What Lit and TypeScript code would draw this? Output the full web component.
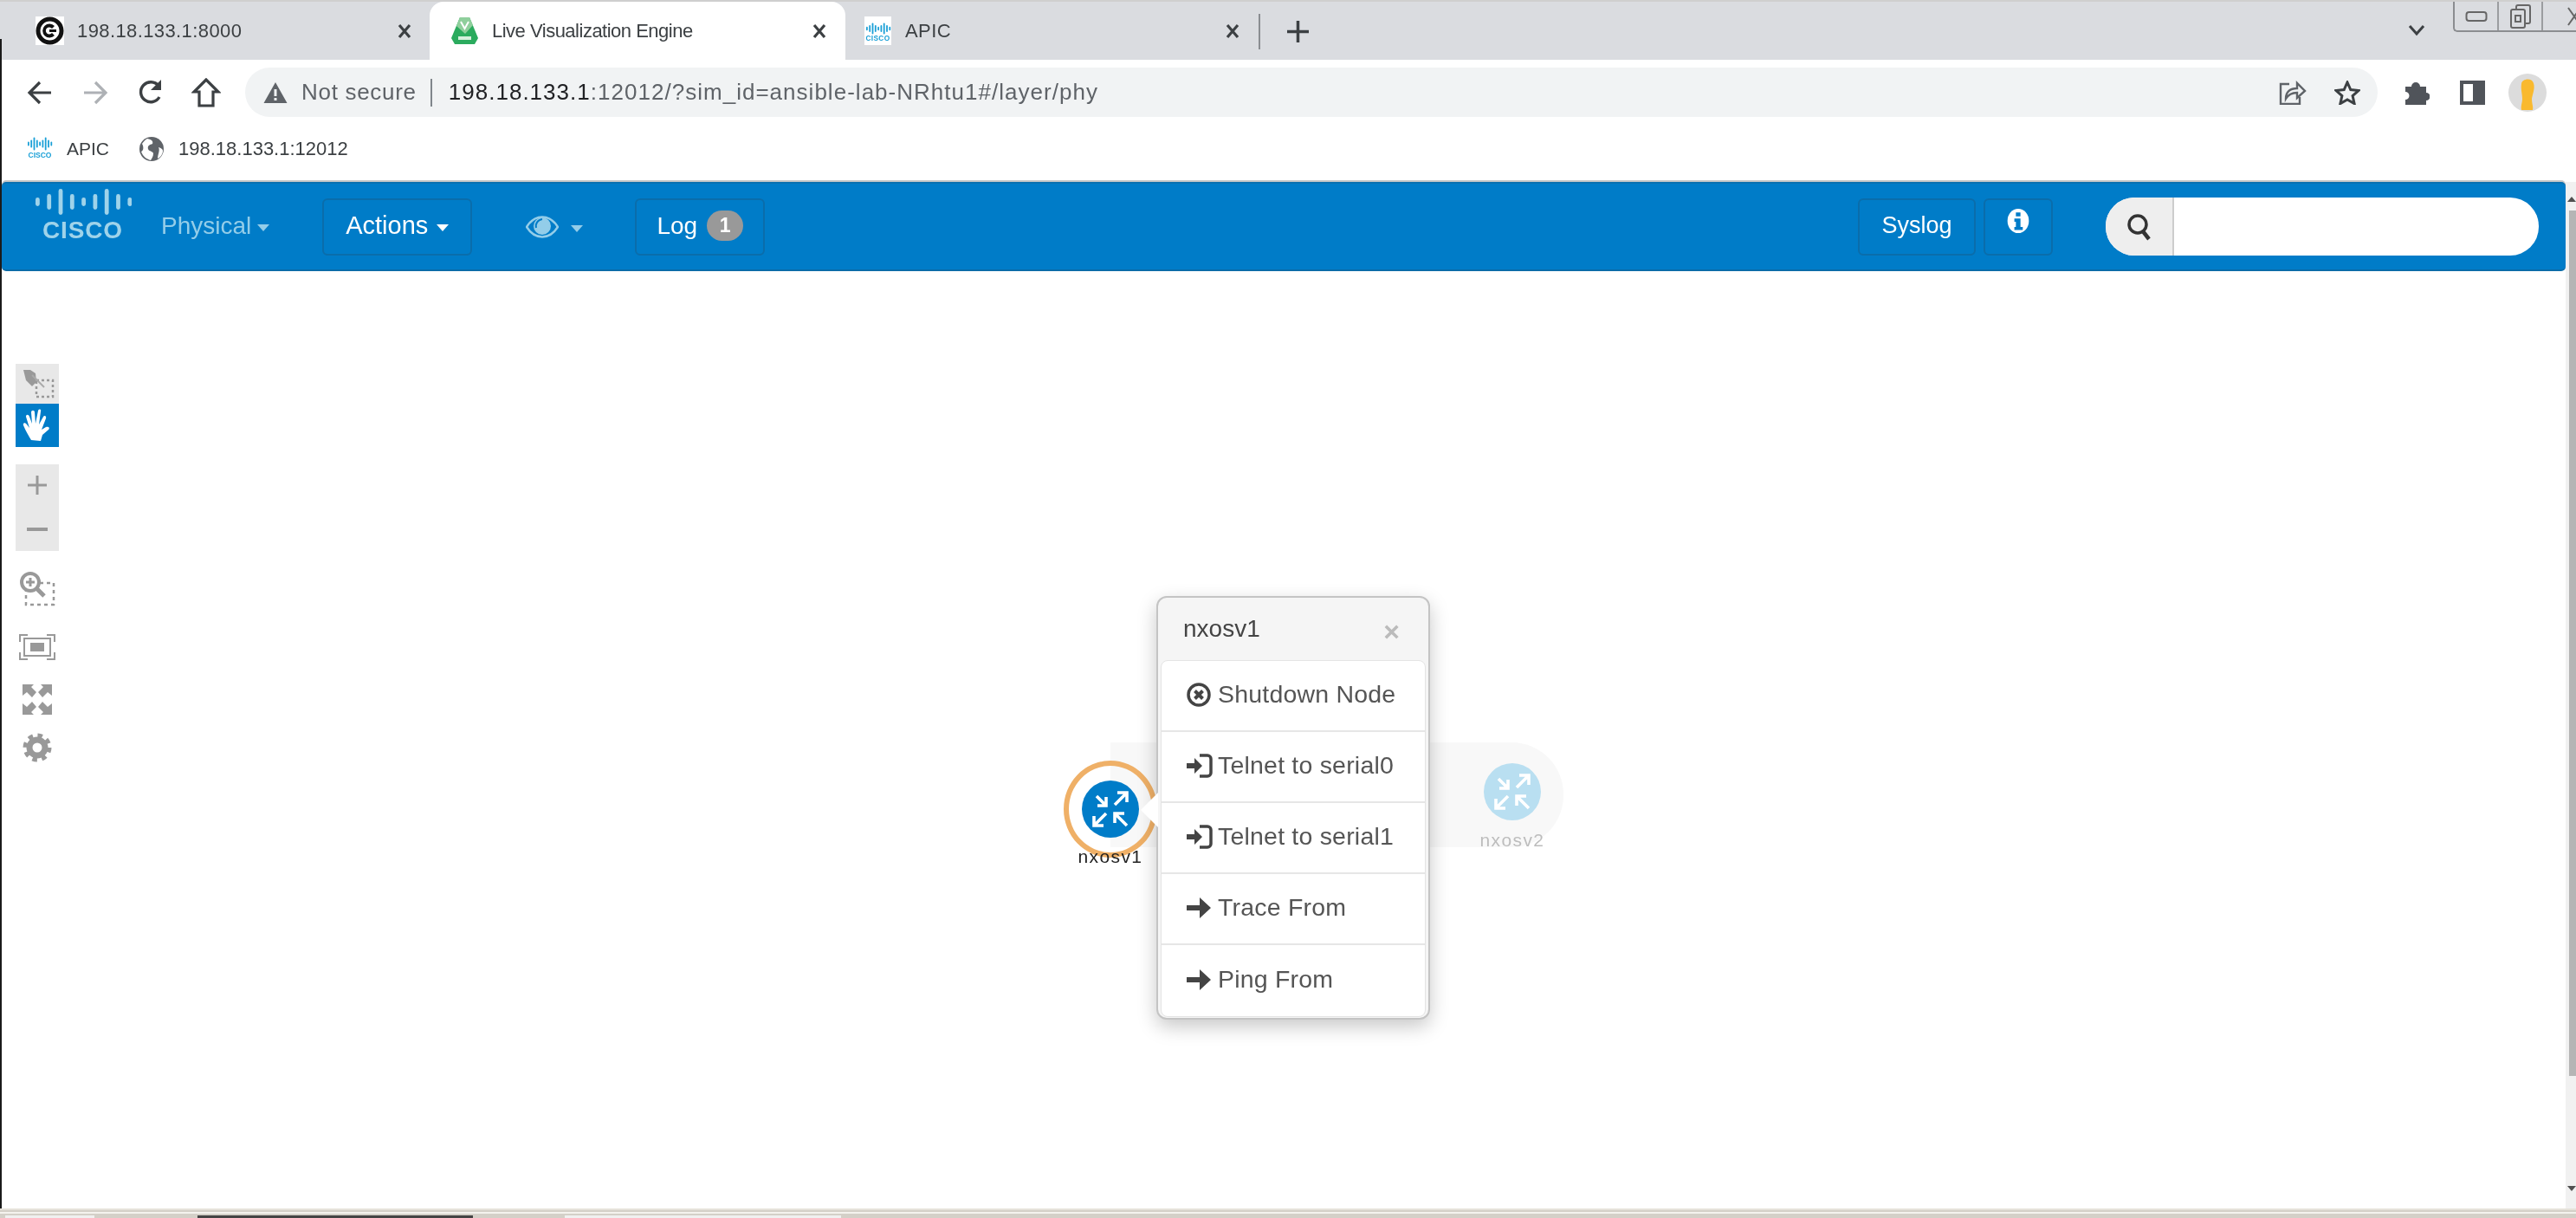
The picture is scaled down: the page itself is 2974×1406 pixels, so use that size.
import { LitElement, html, svg, css } from "lit";
import { customElement } from "lit/decorators.js";

const ciscoBars = (x0: number, step: number, w: number, cy: number, scale: number, color: string) =>
  [0.33, 0.6, 1, 0.6, 0.33, 0.6, 1, 0.6, 0.33].map(
    (h, i) => svg`<rect x=${x0 + i * step} y=${cy - (h * scale) / 2} width=${w} height=${h * scale} rx=${w / 2} fill=${color}></rect>`
  );

const smallCisco = html`<svg width="30" height="30" viewBox="0 0 30 30">
  ${ciscoBars(1, 3.3, 1.8, 9, 15, "#1ba0d7")}
  <text x="15" y="25" text-anchor="middle" font-family="Liberation Sans" font-weight="700" font-size="9" textLength="27" lengthAdjust="spacingAndGlyphs" fill="#1ba0d7">CISCO</text>
</svg>`;

const tabCisco = html`<svg width="31" height="33" viewBox="0 0 31 33">
  <rect width="31" height="33" fill="#fff"></rect>
  ${ciscoBars(2, 3.3, 1.8, 14, 13, "#1ba0d7")}
  <text x="15.500" y="28" text-anchor="middle" font-family="Liberation Sans" font-weight="700" font-size="9.500" textLength="28" lengthAdjust="spacingAndGlyphs" fill="#1ba0d7">CISCO</text>
</svg>`;

const menuIcons: Record<string, unknown> = {
  shut: html`<svg width="30" height="30" viewBox="0 0 30 30">
    <circle cx="14" cy="15" r="12" fill="none" stroke="#444" stroke-width="3.5"></circle>
    <path d="M9.5 10.5l9 9M18.5 10.5l-9 9" stroke="#444" stroke-width="4"></path>
  </svg>`,
  login: html`<svg width="30" height="30" viewBox="0 0 30 30">
    <path d="M0 12h9V6l9 9-9 9v-6H0z" fill="#444"></path>
    <path d="M15 3h9a4 4 0 0 1 4 4v16a4 4 0 0 1-4 4h-9" fill="none" stroke="#444" stroke-width="3.5"></path>
  </svg>`,
  arrow: html`<svg width="30" height="30" viewBox="0 0 30 30">
    <path d="M0 12h15V3l13 12-13 12v-9H0z" fill="#444"></path>
  </svg>`,
};

const nodeArrows = (c: string) => html`<svg width="66" height="66" viewBox="0 0 66 66">
  <g fill="none" stroke=${c} stroke-width="3.6">
    <path d="M17 18l11 11M28 19v10H18"></path>
    <path d="M38 28l14-14M41 14h11v11"></path>
    <path d="M14 52l14-14M14 41v11h11"></path>
    <path d="M52 52L38 38M38 49V38h11"></path>
  </g>
</svg>`;

const menu = [
  { icon: "shut", label: "Shutdown Node" },
  { icon: "login", label: "Telnet to serial0" },
  { icon: "login", label: "Telnet to serial1" },
  { icon: "arrow", label: "Trace From" },
  { icon: "arrow", label: "Ping From" },
];

@customElement("app-root")
export class AppRoot extends LitElement {
  static styles = css`
    :host {
      display: flex;
      flex-direction: column;
      position: relative;
      width: 2974px;
      height: 1406px;
      overflow: hidden;
      background: #fff;
      font-family: "Liberation Sans", Arial, sans-serif;
      color: #3c4043;
      filter: blur(0.5px);
    }
    svg {
      display: block;
      flex: none;
    }
    .edge {
      position: absolute;
      left: 0;
      top: 45px;
      bottom: 11px;
      width: 2px;
      background: #1a1a1a;
    }

    /* browser chrome */
    .tabstrip {
      display: flex;
      align-items: stretch;
      height: 67px;
      margin-top: 2px;
      flex: none;
      background: #dadce0;
      box-shadow: 0 -2px 0 #cfcfcf;
    }
    .tab {
      display: flex;
      align-items: center;
      width: 480px;
      padding: 0 21px 0 24px;
      box-sizing: border-box;
      font-size: 22px;
      letter-spacing: 0.4px;
      color: #3c4043;
    }
    .tab.first {
      width: 496px;
      padding: 0 20px 0 41px;
    }
    .tab.active {
      background: #fff;
      border-radius: 16px 16px 0 0;
      letter-spacing: -0.5px;
    }
    .tab.last {
      width: 477px;
      padding-left: 22px;
    }
    .tab .name {
      flex: 1;
      margin-left: 15px;
    }
    .tab.last .name {
      margin-left: 16px;
    }
    .close {
      flex: none;
    }
    .tab-sep {
      width: 2px;
      height: 41px;
      margin-top: 14px;
      background: #8a8d91;
    }
    .newtab {
      margin: 22px 0 0 31px;
    }
    .strip-end {
      flex: 1;
      display: flex;
      justify-content: flex-end;
    }
    .chev {
      margin: 26px 32px 0 0;
    }
    .winctl {
      display: flex;
      height: 33px;
      border: solid #8b8d90;
      border-width: 0 0 2px 2px;
      border-radius: 0 0 0 5px;
      margin-right: -7px;
    }
    .winctl div {
      width: 49px;
      border-right: 2px solid #9b9da0;
      display: flex;
      align-items: center;
      justify-content: center;
    }
    .winctl .x-cell {
      justify-content: flex-end;
      margin-right: -6px;
    }

    .toolbar {
      display: flex;
      align-items: center;
      height: 57px;
      padding: 9px 24px 11px 14px;
      flex: none;
    }
    .tbtn {
      width: 64px;
      display: flex;
      justify-content: center;
      flex: none;
    }
    .omni {
      display: flex;
      align-items: center;
      width: 2462px;
      height: 57px;
      margin: 0 13px;
      padding: 0 21px;
      box-sizing: border-box;
      flex: none;
      background: #f1f3f4;
      border-radius: 29px;
      font-size: 26px;
    }
    .secure {
      margin-left: 16px;
      letter-spacing: 0.7px;
      color: #5f6368;
    }
    .omni-sep {
      width: 2px;
      height: 32px;
      margin: 0 19px 0 16px;
      background: #80868b;
    }
    .url {
      flex: 1;
      letter-spacing: 1.02px;
      color: #5f6368;
    }
    .url b {
      font-weight: 400;
      color: #202124;
    }
    .omni-icons {
      display: flex;
      gap: 32px;
      margin-right: -1px;
    }

    .bookmarks {
      display: flex;
      align-items: center;
      height: 52px;
      padding: 0 0 0 31px;
      flex: none;
      font-size: 21px;
      color: #3c4043;
    }
    .bm-name {
      margin: 0 35px 0 16px;
    }
    .bm-url {
      margin-left: 17px;
      font-size: 22px;
    }
    .top-rule {
      height: 12px;
      flex: none;
    }

    /* page */
    .body {
      display: flex;
      flex: 1;
      min-height: 0;
    }
    .page {
      flex: 1;
      display: flex;
      flex-direction: column;
      position: relative;
    }
    .scroll {
      width: 12px;
      flex: none;
      padding: 33px 0 0 4px;
      box-sizing: border-box;
      position: relative;
      background: #f1f1f1;
    }
    .thumb {
      height: 999px;
      background: #b5b5b5;
    }
    .scroll-up,
    .scroll-down {
      position: absolute;
      right: 0;
      width: 0;
      height: 0;
      border: 5px solid transparent;
    }
    .scroll-up {
      top: 12px;
      border-bottom: 6px solid #505050;
    }
    .scroll-down {
      bottom: 15px;
      border-top: 6px solid #505050;
    }

    .navbar {
      display: flex;
      align-items: center;
      height: 103px;
      flex: none;
      margin-left: 2px;
      box-sizing: border-box;
      background: #007cc8;
      border-bottom: 2px solid #0a6ba8;
      border-top: 2px solid #0a70b0;
      border-radius: 5px;
      box-shadow: 0 -2px 0 #c8c8c8;
      font-size: 28px;
      color: #fff;
    }
    .logo {
      align-self: flex-start;
      margin: 6px 0 0 38px;
    }
    .physical {
      display: flex;
      align-items: center;
      margin-left: 34px;
      padding-bottom: 2px;
      color: #93cde9;
    }
    .caret {
      width: 0;
      height: 0;
      margin-left: 7px;
      margin-top: 4px;
      border: 7px solid transparent;
      border-top: 8px solid currentColor;
      border-bottom: 0;
    }
    .nbtn {
      display: flex;
      align-items: center;
      justify-content: center;
      height: 66px;
      padding-bottom: 2px;
      box-sizing: border-box;
      border: 2px solid #0a6dab;
      border-radius: 6px;
    }
    .actions {
      width: 173px;
      margin-left: 61px;
      font-size: 29px;
    }
    .actions .caret {
      margin-left: 10px;
      color: #fff;
    }
    .eye {
      display: flex;
      align-items: center;
      margin-left: 62px;
      color: #93cde9;
    }
    .eye .caret {
      margin-left: 14px;
    }
    .log {
      width: 150px;
      margin-left: 60px;
      gap: 11px;
    }
    .badge {
      display: flex;
      align-items: center;
      justify-content: center;
      width: 42px;
      height: 35px;
      border-radius: 18px;
      background: #999;
      font-size: 23px;
      font-weight: 700;
    }
    .nav-gap {
      flex: 1;
    }
    .syslog {
      width: 136px;
      font-size: 27px;
    }
    .info {
      width: 80px;
      margin-left: 9px;
    }
    .search {
      display: flex;
      width: 500px;
      height: 67px;
      margin: 0 31px 0 61px;
      border-radius: 33px;
      overflow: hidden;
      background: #fff;
    }
    .search-add {
      display: flex;
      align-items: center;
      justify-content: center;
      width: 77px;
      background: #eee;
      border-right: 2px solid #ccc;
    }

    .canvas {
      flex: 1;
      position: relative;
      display: flex;
      flex-direction: column;
      align-items: flex-start;
      padding: 107px 0 0 18px;
    }
    .tool-group {
      width: 50px;
      background: #e8e8e8;
    }
    .tool {
      display: flex;
      align-items: center;
      justify-content: center;
      height: 50px;
    }
    .tool.small {
      height: 46px;
    }
    .tool.on {
      background: #007cc8;
    }
    .zoom-group {
      margin-top: 20px;
    }
    .free-tools {
      display: flex;
      flex-direction: column;
      align-items: center;
      width: 50px;
      margin-top: 24px;
    }
    .free-tools .fit {
      margin-top: 32px;
    }
    .free-tools .full {
      margin-top: 27px;
    }
    .free-tools .gear {
      margin-top: 20px;
    }

    /* topology */
    .band {
      position: absolute;
      left: 1282px;
      top: 544px;
      width: 523px;
      height: 121px;
      background: #f8f8f8;
      border-radius: 0 60px 60px 0;
    }
    .node {
      position: absolute;
      display: flex;
      align-items: center;
      justify-content: center;
      width: 66px;
      height: 66px;
      border-radius: 50%;
    }
    .node.n1 {
      left: 1249px;
      top: 588px;
      background: #007cc8;
    }
    .node.n2 {
      left: 1713px;
      top: 568px;
      background: #b9dff1;
    }
    .ring {
      position: absolute;
      left: 1228px;
      top: 565px;
      width: 108px;
      height: 112px;
      box-sizing: border-box;
      border: 6px solid #efb067;
      border-radius: 50%;
    }
    .label {
      position: absolute;
      width: 120px;
      text-align: center;
      font-size: 21px;
      letter-spacing: 1.4px;
    }
    .label.l1 {
      left: 1222px;
      top: 664px;
      color: #222;
    }
    .label.l2 {
      left: 1686px;
      top: 645px;
      color: #bdbdbd;
    }

    .popup {
      position: absolute;
      left: 1335px;
      top: 375px;
      width: 316px;
      height: 489px;
      box-sizing: border-box;
      background: #f5f5f5;
      border: 2px solid #c4c4c4;
      border-radius: 12px;
      box-shadow: 0 8px 22px rgba(0, 0, 0, 0.22);
    }
    .pointer {
      position: absolute;
      left: -20px;
      top: 225px;
      width: 0;
      height: 0;
      border: solid transparent;
      border-width: 20px 20px 20px 0;
      border-right-color: #fff;
    }
    .pop-head {
      display: flex;
      align-items: center;
      justify-content: space-between;
      height: 72px;
      padding: 0 33px 0 29px;
      font-size: 28px;
      color: #444;
    }
    .pop-x {
      font-size: 32px;
      font-weight: 700;
      color: #bbb;
      margin-top: 6px;
    }
    .pop-list {
      margin: 0 3px;
      background: #fff;
      border-radius: 8px;
      border: 1px solid #e4e4e4;
    }
    .row {
      display: flex;
      align-items: center;
      gap: 6px;
      height: 80px;
      padding: 0 0 3px 29px;
      box-sizing: border-box;
      border-bottom: 2px solid #e6e6e6;
      height: 82px;
      font-size: 28.5px;
      letter-spacing: 0.2px;
      color: #555;
    }
    .row:last-child {
      border-bottom: 0;
    }

    .taskbar {
      position: relative;
      height: 11px;
      flex: none;
      box-sizing: border-box;
      background: #d4d0c8;
      border-top: 2px solid #e6e2da;
      display: flex;
      align-items: flex-end;
    }
    .taskbar::before {
      content: "";
      position: absolute;
      left: 0;
      right: 0;
      top: 2px;
      height: 2px;
      background: #f4f2ee;
    }
    .tb {
      height: 3px;
      width: 103px;
      margin-left: 6px;
      background: #f0f0f0;
    }
    .tb.dark {
      width: 318px;
      margin-left: 119px;
      background: #444;
    }
    .tb.wide {
      width: 319px;
      margin-left: 106px;
    }
  `;

  render() {
    const tabClose = html`<svg class="close" width="18" height="20" viewBox="0 0 18 20">
      <path d="M3 3l12 14M15 3L3 17" stroke="#3c4043" stroke-width="3.2"></path>
    </svg>`;
    return html`
      <div class="edge"></div>

      <div class="tabstrip">
        <div class="tab first">
          <svg width="33" height="33" viewBox="0 0 33 33">
            <rect width="33" height="33" fill="#fff"></rect>
            <circle cx="16.5" cy="16.5" r="13.5" fill="none" stroke="#111" stroke-width="5"></circle>
            <path d="M22 11a8 8 0 1 0 0 11l-3-3a4 4 0 1 1 0-5z" fill="#111"></path>
            <rect x="16" y="15" width="8" height="3" fill="#111"></rect>
          </svg>
          <span class="name">198.18.133.1:8000</span>
          ${tabClose}
        </div>
        <div class="tab active">
          <svg width="33" height="33" viewBox="0 0 33 33">
            <path d="M11 1h11l10 24-4 7H5l-4-7z" fill="#2bab5e"></path>
            <path d="M11 1h11l4 9-9 10-10-9z" fill="#8fcf9c"></path>
            <path d="M12 6l4.500 8 4.500-8" fill="none" stroke="#fff" stroke-width="2"></path>
            <path d="M9 25h15" stroke="#d5f0dc" stroke-width="4"></path>
          </svg>
          <span class="name">Live Visualization Engine</span>
          ${tabClose}
        </div>
        <div class="tab last">
          ${tabCisco}
          <span class="name">APIC</span>
          ${tabClose}
        </div>
        <div class="tab-sep"></div>
        <svg class="newtab" width="25" height="25" viewBox="0 0 25 25">
          <path d="M12.500 0v25M0 12.500h25" stroke="#3c4043" stroke-width="3.500"></path>
        </svg>
        <div class="strip-end">
          <svg class="chev" width="20" height="14" viewBox="0 0 20 14">
            <path d="M2 2l8 9 8-9" fill="none" stroke="#3c4043" stroke-width="3"></path>
          </svg>
          <div class="winctl">
            <div>
              <svg width="26" height="14" viewBox="0 0 26 14"><rect x="1.500" y="2" width="23" height="10" rx="3" fill="none" stroke="#666" stroke-width="2"></rect></svg>
            </div>
            <div>
              <svg width="26" height="28" viewBox="0 0 26 28">
                <rect x="8" y="1" width="16" height="21" rx="2" fill="#dadce0" stroke="#666" stroke-width="2"></rect>
                <rect x="2" y="6" width="16" height="21" rx="2" fill="#dadce0" stroke="#666" stroke-width="2"></rect>
                <rect x="7" y="13" width="6" height="7" fill="none" stroke="#666" stroke-width="2"></rect>
              </svg>
            </div>
            <div class="x-cell">
              <svg width="26" height="28" viewBox="0 0 26 28"><path d="M6 4l14 20M20 4L6 24" stroke="#666" stroke-width="2"></path></svg>
            </div>
          </div>
        </div>
      </div>

      <div class="toolbar">
        <div class="tbtn">
          <svg width="30" height="30" viewBox="0 0 30 30"><path d="M28 15H4M15 3L3 15l12 12" fill="none" stroke="#3c4043" stroke-width="3.200"></path></svg>
        </div>
        <div class="tbtn">
          <svg width="30" height="30" viewBox="0 0 30 30"><path d="M2 15h24M15 3l12 12-12 12" fill="none" stroke="#aeb1b5" stroke-width="3.200"></path></svg>
        </div>
        <div class="tbtn">
          <svg width="30" height="32" viewBox="0 0 30 32">
            <path d="M25 21a11.500 11.500 0 1 1-1-13" fill="none" stroke="#3c4043" stroke-width="3.400"></path>
            <path d="M27 1v12H15z" fill="#3c4043"></path>
          </svg>
        </div>
        <div class="tbtn">
          <svg width="34" height="34" viewBox="0 0 34 34"><path d="M17 2L3 16h6v16h16V16h6z" fill="none" stroke="#3c4043" stroke-width="3.200"></path></svg>
        </div>
        <div class="omni">
          <svg width="28" height="26" viewBox="0 0 28 26">
            <path d="M14 1l13.500 24H.5z" fill="#5f6368"></path>
            <path d="M14 9v8M14 19v3" stroke="#f1f3f4" stroke-width="3"></path>
          </svg>
          <span class="secure">Not secure</span>
          <span class="omni-sep"></span>
          <span class="url"><b>198.18.133.1</b>:12012/?sim_id=ansible-lab-NRhtu1#/layer/phy</span>
          <div class="omni-icons">
            <svg width="32" height="28" viewBox="0 0 32 28">
              <path d="M12 4H2v23h22v-8" fill="none" stroke="#5f6368" stroke-width="2.400"></path>
              <path d="M8 21c0-8 5-12 13-12V3l9 9-9 8v-6c-6 0-10 2-13 7z" fill="none" stroke="#5f6368" stroke-width="2.400"></path>
            </svg>
            <svg width="30" height="28" viewBox="0 0 30 28">
              <path d="M15 2l3.800 8.500 9.200 1-6.900 6.100 2 9-8.100-4.700-8.100 4.700 2-9L2 11.500l9.200-1z" fill="none" stroke="#3c4043" stroke-width="3"></path>
            </svg>
          </div>
        </div>
        <div class="tbtn">
          <svg width="30" height="30" viewBox="0 0 30 30">
            <path d="M2 8h7a5 5 0 1 1 10 0h7v7a4.500 4.500 0 1 1 0 9v5H2v-6a4.500 4.500 0 1 0 0-9z" fill="#50545a"></path>
          </svg>
        </div>
        <div class="tbtn">
          <svg width="29" height="28" viewBox="0 0 29 28">
            <rect x="2" y="2" width="25" height="24" fill="#fff" stroke="#50545a" stroke-width="4"></rect>
            <rect x="15" y="2" width="12" height="24" fill="#50545a"></rect>
          </svg>
        </div>
        <div class="tbtn">
          <svg width="44" height="44" viewBox="0 0 44 44">
            <ellipse cx="22" cy="22" rx="22" ry="22" fill="#dcdcdc"></ellipse>
            <path d="M15 12c0-6 12-8 14-1 2 6-1 12-2 18 0 6 2 9 1 13H15c-1-5 1-8 1-13 0-6-2-11-1-17z" fill="#f9b92e"></path>
          </svg>
        </div>
      </div>

      <div class="bookmarks">
        ${smallCisco}
        <span class="bm-name">APIC</span>
        <svg width="28" height="30" viewBox="0 0 28 30">
          <circle cx="14" cy="15" r="14" fill="#5f6368"></circle>
          <path d="M9 3c5 1 7 3 6 6-3 1-6 2-5 6 1 3 5 2 6 5 0 4-2 6-3 8-4-1-9-4-11-10 3-1 3-6 1-9 2-3 4-5 6-6zM22 13c3 1 5 2 5 4 0 4-3 8-6 9 0-5 3-9 1-13z" fill="#fff"></path>
        </svg>
        <span class="bm-url">198.18.133.1:12012</span>
      </div>
      <div class="top-rule"></div>

      <div class="body">
        <div class="page">
          <div class="navbar">
            <svg class="logo" width="112" height="64" viewBox="0 0 112 64">
              ${ciscoBars(1, 13.300, 4.800, 15, 30, "#9fd3ea")}
              <text x="55" y="57" text-anchor="middle" font-family="Liberation Sans" font-weight="700" font-size="28" textLength="92" lengthAdjust="spacing" fill="#9fd3ea">CISCO</text>
            </svg>
            <div class="physical">Physical<span class="caret"></span></div>
            <div class="nbtn actions">Actions<span class="caret"></span></div>
            <div class="eye">
              <svg width="38" height="26" viewBox="0 0 38 26">
                <path d="M1 13C6 5 12 1.500 19 1.500S32 5 37 13c-5 8-11 11.500-18 11.500S6 21 1 13z" fill="none" stroke="#93cde9" stroke-width="2.500"></path>
                <circle cx="19" cy="12" r="10" fill="#93cde9"></circle>
                <path d="M12 14a8 8 0 0 1 7-10" fill="none" stroke="#007cc8" stroke-width="2"></path>
              </svg>
              <span class="caret"></span>
            </div>
            <div class="nbtn log">Log<span class="badge">1</span></div>
            <div class="nav-gap"></div>
            <div class="nbtn syslog">Syslog</div>
            <div class="nbtn info">
              <svg width="26" height="30" viewBox="0 0 28 34" style="margin-top:-12px">
                <ellipse cx="14" cy="17" rx="14" ry="16" fill="#fff"></ellipse>
                <path d="M11 6h6v5h-6zM9 14h8v11h3v4H9v-4h2v-7H9z" fill="#007cc8"></path>
              </svg>
            </div>
            <div class="search">
              <div class="search-add">
                <svg width="30" height="32" viewBox="0 0 30 32">
                  <circle cx="13" cy="13" r="10" fill="none" stroke="#333" stroke-width="3.500"></circle>
                  <path d="M19 21l7 9" stroke="#333" stroke-width="4.500"></path>
                </svg>
              </div>
            </div>
          </div>

          <div class="canvas">
            <div class="tool-group">
              <div class="tool small">
                <svg width="40" height="36" viewBox="0 0 40 36">
                  <path d="M4 2h8l6 4 1 10-5 5-7-7z" fill="#999"></path>
                  <rect x="19" y="14" width="19" height="19" fill="none" stroke="#999" stroke-width="2.500" stroke-dasharray="3 3"></rect>
                  <path d="M14 8l14 14" stroke="#aaa" stroke-width="2"></path>
                </svg>
              </div>
              <div class="tool on">
                <svg width="34" height="38" viewBox="0 0 34 38">
                  <path d="M10 36c-3-5-6-10-9-17-1-3 2-4 4-1l3 4L4 9c0-3 3-3 4 0l3 8-1-13c0-3 4-3 4 0l1 13 3-15c1-2 4-2 3 1l-2 15 5-9c1-2 4-1 3 2l-5 13 5-3c3-1 5 1 3 3l-7 6-2 7z" fill="#fff"></path>
                </svg>
              </div>
            </div>
            <div class="tool-group zoom-group">
              <div class="tool">
                <svg width="24" height="24" viewBox="0 0 24 24"><path d="M12 0v22M1 11h22" stroke="#999" stroke-width="3"></path></svg>
              </div>
              <div class="tool">
                <svg width="24" height="6" viewBox="0 0 24 6"><path d="M0 3h24" stroke="#999" stroke-width="4"></path></svg>
              </div>
            </div>
            <div class="free-tools">
              <svg width="42" height="40" viewBox="0 0 42 40">
                <rect x="8" y="13" width="32" height="25" fill="none" stroke="#999" stroke-width="2.500" stroke-dasharray="4 4"></rect>
                <circle cx="13" cy="12" r="10" fill="#fff" stroke="#999" stroke-width="4"></circle>
                <path d="M8 12h10M13 7v10" stroke="#999" stroke-width="3"></path>
                <path d="M20 19l9 9" stroke="#999" stroke-width="5"></path>
              </svg>
              <svg class="fit" width="42" height="30" viewBox="0 0 42 30">
                <path d="M1 9V1h9M32 1h9v8M41 21v8h-9M10 29H1v-8" fill="none" stroke="#999" stroke-width="2"></path>
                <rect x="6" y="5" width="30" height="20" fill="none" stroke="#999" stroke-width="2"></rect>
                <rect x="13" y="10" width="16" height="10" fill="#999"></rect>
              </svg>
              <svg class="full" width="36" height="37" viewBox="0 0 36 37">
                <path d="M1 1h13l-3 3 6 6-5 6-6-6-5 4zM35 1H22l3 3-6 6 5 6 6-6 5 4zM1 36h13l-3-3 6-6-5-6-6 6-5-4zM35 36H22l3-3-6-6 5-6 6 6 5-4z" fill="#999"></path>
              </svg>
              <svg class="gear" width="34" height="34" viewBox="0 0 34 34">
                <circle cx="17" cy="17" r="14" fill="none" stroke="#999" stroke-width="5" stroke-dasharray="5.500 5.500"></circle>
                <circle cx="17" cy="17" r="9" fill="none" stroke="#999" stroke-width="7"></circle>
              </svg>
            </div>

            <div class="band"></div>
            <div class="ring"></div>
            <div class="node n1">${nodeArrows("#fff")}</div>
            <div class="label l1">nxosv1</div>
            <div class="node n2">${nodeArrows("#fff")}</div>
            <div class="label l2">nxosv2</div>

            <div class="popup">
              <div class="pointer"></div>
              <div class="pop-head">
                <span>nxosv1</span>
                <span class="pop-x">×</span>
              </div>
              <div class="pop-list">
                ${menu.map((m) => html`<div class="row">${menuIcons[m.icon]}<span>${m.label}</span></div>`)}
              </div>
            </div>
          </div>
        </div>
        <div class="scroll">
          <div class="scroll-up"></div>
          <div class="thumb"></div>
          <div class="scroll-down"></div>
        </div>
      </div>

      <div class="taskbar">
        <div class="tb"></div>
        <div class="tb dark"></div>
        <div class="tb wide"></div>
      </div>
    `;
  }
}
